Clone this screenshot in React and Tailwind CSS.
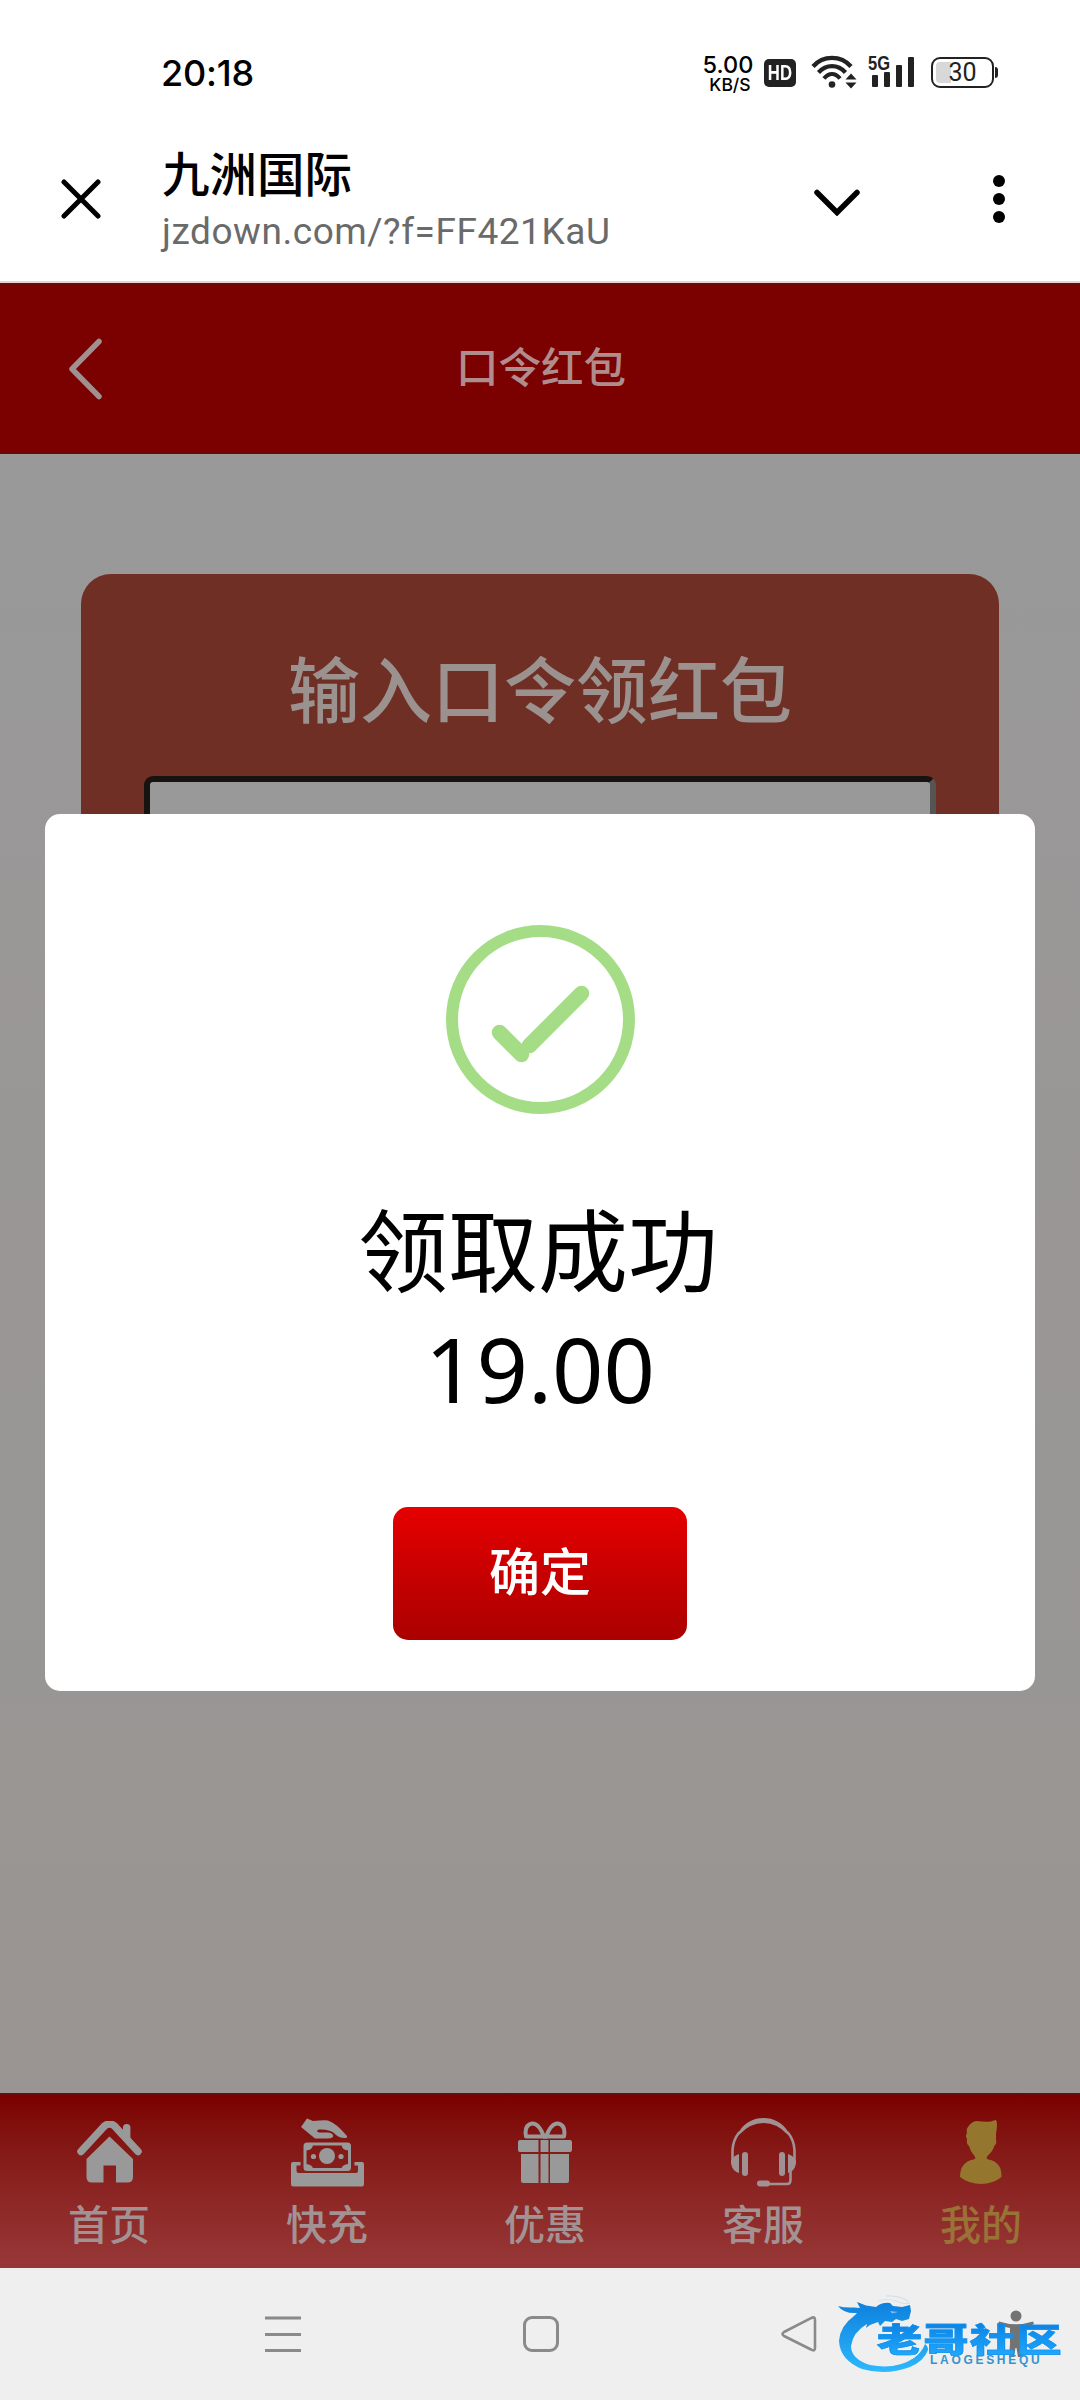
const FONT = 'font-["Noto_Sans","Noto_Sans_CJK_SC",sans-serif]';

function StatusBar() {
  return (
    <div className="flex h-[100px] items-start pl-[161px] pr-[82px] text-black">
      <span className="mt-[52px] font-[Inter,sans-serif] text-[36px] font-medium leading-[42px] tracking-[-0.2px]">20:18</span>
      <div className="ml-auto flex items-start">
        <div className="mt-[54px] w-[52px] text-center font-[Inter,sans-serif] font-medium">
          <div className="-ml-1 text-[23.500px] leading-[22px] whitespace-nowrap">5.00</div>
          <div className="text-[17.500px] leading-[17px]">KB/S</div>
        </div>
        <div className="ml-[8px] mt-[59px] flex h-[28px] w-[32px] items-center justify-center rounded-[5px] bg-[#222]">
          <span className="font-['Liberation_Sans',sans-serif] text-[22px] font-bold leading-none text-white scale-x-[.76]">HD</span>
        </div>
        <svg className="ml-[15px] mt-[54px]" width="46" height="36" viewBox="0 0 46 36" fill="none" stroke="#222" strokeWidth="4.2">
          <path d="M2 12.5C12 1 30 1 40 12.5M7.5 18.5C15 10 27 10 34.500 18.500M13 24.500C18 18.500 24 18.500 29 24.500" />
          <circle cx="21" cy="30.500" r="3.300" fill="#222" stroke="none" />
          <path d="M34.500 25.500l5.500-6 5.500 6zM34.500 28.500l5.500 6 5.500-6z" fill="#222" stroke="none" />
        </svg>
        <svg className="ml-[11px] mt-[50px]" width="48" height="38" viewBox="0 -4 48 38" fill="#222">
          <text x="0" y="16" fontFamily="Liberation Sans" fontWeight="700" fontSize="20" textLength="22" lengthAdjust="spacingAndGlyphs">5G</text>
          <rect x="4" y="21" width="6" height="12" rx="1" />
          <rect x="16" y="18" width="6" height="15" rx="1" />
          <rect x="28" y="11" width="6" height="22" rx="1" />
          <rect x="40" y="3" width="6" height="30" rx="1" />
        </svg>
        <div className="ml-[15px] mt-[57px] flex items-center">
          <div className="flex h-[31px] w-[63px] items-center justify-center rounded-[9px] border-2 border-[#222] bg-[linear-gradient(90deg,#d8d8d8_18px,#fff_18px)] bg-clip-content p-[3px]">
            <span className="font-[Roboto,sans-serif] text-[25px] leading-none text-[#222]">30</span>
          </div>
          <div className="ml-px h-[11px] w-[3px] rounded-r-sm bg-[#222]" />
        </div>
      </div>
    </div>
  );
}

function BrowserBar() {
  return (
    <div className="flex h-[183px] items-start border-b-2 border-[#f0d0d0]">
      <svg className="ml-[61px] mt-[79px] shrink-0" width="40" height="40" viewBox="0 0 40 40" stroke="#000" strokeWidth="5" strokeLinecap="round">
        <path d="M3 3l34 34M37 3L3 37" />
      </svg>
      <div className="ml-[61px] mt-[45px] w-[560px]">
        <div className="text-[47.500px] font-medium leading-[58px] text-black">九洲国际</div>
        <div className="mt-[6px] font-[Roboto,sans-serif] text-[37px] leading-[46px] tracking-[0.55px] text-[#6a6a6a]">jzdown.com/?f=FF421KaU</div>
      </div>
      <svg className="ml-[92px] mt-[89px] shrink-0" width="46" height="27" viewBox="0 0 46 27" fill="none" stroke="#000" strokeWidth="5.500" strokeLinecap="round">
        <path d="M3 3.500l20 20 20-20" />
      </svg>
      <svg className="ml-[132px] mt-[75px] shrink-0" width="14" height="48" viewBox="0 0 14 48">
        <circle cx="7" cy="6" r="6" /><circle cx="7" cy="24" r="6" /><circle cx="7" cy="42" r="6" />
      </svg>
    </div>
  );
}

function HomeIcon() {
  return (
    <svg width="65" height="62" viewBox="0 0 65 62" fill="#999">
      <path d="M4 30.500L27.500 5Q32.500 1 37.500 5L61 30.500" fill="none" stroke="#999" strokeWidth="7.500" strokeLinecap="round" />
      <path d="M46 13V6.500q0-3.500 3.700-3.500t3.700 3.500V22z" />
      <path d="M32.500 15.500L56 38v18q0 5.500-5.500 5.500H39V44.500H26.500v17H15q-5.500 0-5.500-5.500V38z" />
    </svg>
  );
}

function CashIcon() {
  return (
    <svg width="73" height="69" viewBox="0 0 73 69" fill="#999">
      <path d="M10 9L16 .5 22 3Q32 2 37 2.500Q45 5 56 18Q56.500 20 54 20Q47 20 43 15Q38 11 28 11.500Q24 13 28 14.500H37Q43 15 42 19Q40 21 34 20.500H24Z" />
      <rect x="14" y="26" width="44.500" height="25.500" rx="2" fill="none" stroke="#999" strokeWidth="3" />
      <path d="M15 27h7q-.5 5-7 5.500zM57.500 27h-7q.5 5 7 5.500zM15 50.500h7q-.5-4-7-4.500zM57.500 50.500h-7q.5-4 7-4.500z" />
      <circle cx="36" cy="38" r="8" />
      <circle cx="22.500" cy="38.500" r="2.600" /><circle cx="50" cy="38.500" r="2.600" />
      <path d="M2 44H9.500V47.500H5.500V53Q5.500 55 7.500 55H65Q67 55 67 53V47.500H63.500V44H71Q73 44 73 46V66Q73 68.500 71 68.500H2Q0 68.500 0 66V46Q0 44 2 44Z" />
    </svg>
  );
}

function GiftIcon() {
  return (
    <svg width="54" height="62" viewBox="0 0 54 62" fill="#999">
      <path d="M26 16Q21 2 14 2.500Q6 4 8 15.500H26ZM28 16Q33 2 40 2.500Q48 4 46 15.500H28Z" fill="none" stroke="#999" strokeWidth="4" strokeLinejoin="round" />
      <path d="M2 19H20.500V31H2Q0 31 0 29V21Q0 19 2 19ZM22.500 19h8v12h-8zM32 19H52Q54 19 54 21V29Q54 31 52 31H32Z" />
      <path d="M3 33H20.500V62H5Q3 62 3 60ZM22.500 33h8v29h-8zM32 33H51V60Q51 62 49 62H32Z" />
    </svg>
  );
}

function HeadsetIcon() {
  return (
    <svg width="65" height="69" viewBox="0 0 65 69" fill="#a09294">
      <path d="M1.500 46V32Q2 22 8.500 14M63.500 46V32Q63 22 56.500 14M59.500 53V62Q59.500 66 56 66H38" fill="none" stroke="#a09294" strokeWidth="2.600" />
      <path d="M8 13.500Q17 0 32.500 0T57 13.500L56.500 16.500Q46 5 32.500 5T8.500 16.500Z" />
      <path d="M8 36V55Q1 53 0 45V43Q2 38 8 36ZM57 36V55Q64 53 65 45V43Q63 38 57 36Z" />
      <rect x="11" y="34" width="6" height="24" rx="3" /><rect x="48" y="34" width="6" height="24" rx="3" />
      <rect x="26" y="62.500" width="13" height="6" rx="3" />
    </svg>
  );
}

function PersonIcon() {
  return (
    <svg width="42" height="64" viewBox="0 0 42 64" fill="#94762f">
      <path d="M7 13Q6 9 8 7Q11 2 16 1Q26 2 31 1.500Q34 0 36 0Q38 3 36 14V20Q37 24 34.500 25.500Q33 31 27.500 36Q25.500 38.500 28.500 39.500Q42 42 41.500 57Q33 64 21 64T0 57Q0 42 13.500 39.500Q16.500 38.500 14.500 36Q10 31 9 26Q6 24 7 19Q5 16 7 13Z" />
    </svg>
  );
}

const TABS = [
  { label: "首页", Icon: HomeIcon, color: "text-[#a39294]" },
  { label: "快充", Icon: CashIcon, color: "text-[#a39294]" },
  { label: "优惠", Icon: GiftIcon, color: "text-[#a39294]" },
  { label: "客服", Icon: HeadsetIcon, color: "text-[#a39294]" },
  { label: "我的", Icon: PersonIcon, color: "text-[#9a7136]" },
];

function TabBar() {
  return (
    <div className="flex h-[175px] overflow-hidden border-t-2 border-[#6b0c0c] bg-linear-to-b from-[#7b0000] to-[#973838]">
      {TABS.map(({ label, Icon, color }) => (
        <div key={label} className="flex w-[218px] shrink-0 flex-col items-center">
          <div className="mt-[22px] flex h-[70px] items-center justify-center"><Icon /></div>
          <div className={"mt-[9px] text-[41px] font-medium leading-[56px] " + color}>{label}</div>
        </div>
      ))}
    </div>
  );
}

function Watermark() {
  return (
    <div className="absolute left-[836px] top-[22px] h-[90px] w-[230px]">
      <svg className="absolute inset-0" width="230" height="90" viewBox="0 0 230 90">
        <defs>
          <linearGradient id="dragon" x1="0" y1="0" x2="0" y2="1">
            <stop offset="0" stopColor="#0d80de" />
            <stop offset="1" stopColor="#2db8fc" />
          </linearGradient>
        </defs>
        <path d="M2 16Q8 18 18 17.500L24 18L21 12L30 15.500L40 17Q46 12 54 13L57 16L66 17L74 15L75 21L73 29L66 31L60 29L56 32L49 31L44 36L42 32L34 35L30 38L31 34Q17 42 15 56Q15 69 34 75Q60 80 78 68Q86 62 89 54Q92 56 92 60Q88 71 74 77Q50 86 26 79Q4 70 3 51Q4 36 18 26L21 23Q8 24 2 16Z" fill="url(#dragon)" />
        <path d="M42 11Q52 8 60 11Q70 15 74 13M50 6Q64 5 73 12" fill="none" stroke="#d3e1ec" strokeWidth="1.200" />
        <path d="M54 21l8 1-6 1.500z" fill="#7dbdf0" />
        <g fill="#737373">
          <circle cx="180" cy="26" r="5.500" />
          <path d="M163 31.500Q180 37 197 31.500L198 34Q192 37 186 38V54L187 67H182L180.500 58H179.500L178 67H173L174 54V38Q168 37 162 34Z" />
        </g>
      </svg>
      <div className="absolute left-[41px] top-[24px] scale-y-[.73] bg-linear-to-b from-[#0b7fe2] to-[#20a8fb] bg-clip-text font-['Noto_Sans_CJK_SC',sans-serif] text-[45px] font-black leading-[48px] tracking-[1.500px] text-transparent [-webkit-text-stroke:1px_#1593ee] whitespace-nowrap">老哥社区</div>
      <div className="absolute left-[94px] top-[63px] font-['Liberation_Sans',sans-serif] text-[12px] font-bold leading-[14px] tracking-[2.700px] text-[#3494d0]">LAOGESHEQU</div>
    </div>
  );
}

function SystemNav() {
  return (
    <div className="relative flex h-[132px] items-start bg-[#efefef] pt-[47px]">
      <svg className="ml-[264px]" width="38" height="38" stroke="#8a8a8a" strokeWidth="3">
        <path d="M1 3h36M1 19.500h36M1 35.500h36" />
      </svg>
      <svg className="ml-[220px]" width="38" height="38" fill="none" stroke="#8a8a8a" strokeWidth="3">
        <rect x="2.500" y="2.500" width="33" height="33" rx="7.500" />
      </svg>
      <svg className="ml-[220px]" width="38" height="38" fill="none" stroke="#8a8a8a" strokeWidth="2.600" strokeLinejoin="round">
        <path d="M31 3.200Q35 1 35 5V33Q35 37 31 34.500L4 21Q1 19 4 17Z" />
      </svg>
      <Watermark />
    </div>
  );
}

function SuccessDialog() {
  return (
    <div className="absolute left-[45px] top-[360px] flex h-[877px] w-[990px] flex-col items-center rounded-[15px] bg-white">
      <svg className="mt-[110px] shrink-0" width="191" height="191" viewBox="445 924 191 191" fill="none" stroke="#a5dc86">
        <circle cx="540.5" cy="1019.5" r="88.500" strokeWidth="12" />
        <path d="M499.500 1032.500l22 22M529.500 1045.500l52-52" strokeWidth="15.500" strokeLinecap="round" />
      </svg>
      <div className="mt-[76px] text-center text-[90px] leading-[118px] text-black">
        <div className="pr-[4px]">领取成功</div>
        <div>19.00</div>
      </div>
      <button className="mt-[80px] h-[133px] w-[294px] rounded-[15px] bg-linear-to-b from-[#e60000] to-[#ab0000] pb-[6px] text-[51px] font-medium leading-[60px] text-white">确定</button>
    </div>
  );
}

export default function App() {
  return (
    <div className={"h-[2400px] w-[1080px] overflow-hidden bg-white " + FONT}>
      <StatusBar />
      <BrowserBar />
      <header className="flex h-[171px] items-center border-y-2 border-[#6b0808] bg-[#7b0000] pl-[68px]">
        <svg width="36" height="62" fill="none" stroke="#a09090" strokeWidth="5.500" strokeLinecap="round" strokeLinejoin="round">
          <path d="M31 3.500L4 31l27 27.500" />
        </svg>
        <h1 className="w-[874px] pb-[3px] text-center text-[42.500px] font-medium leading-[60px] text-[#b08c8c]">口令红包</h1>
      </header>
      <main className="relative h-[1639px] bg-[linear-gradient(#999,#9a9797_30%,#989694_75%,#9a9492)] pt-[120px]">
        <section className="mx-[81px] h-[700px] rounded-[30px] bg-[#6f2f24] px-[63px] pt-[67px]">
          <h2 className="text-center text-[72px] font-medium leading-[96px] text-[#9b9290]">输入口令领红包</h2>
          <div className="mt-[39px] h-[110px] rounded-[9px] border-[6px] border-b-[#555] border-l-[#171310] border-r-[#555] border-t-[#171310] bg-[#999]" />
        </section>
        <SuccessDialog />
      </main>
      <TabBar />
      <SystemNav />
    </div>
  );
}
